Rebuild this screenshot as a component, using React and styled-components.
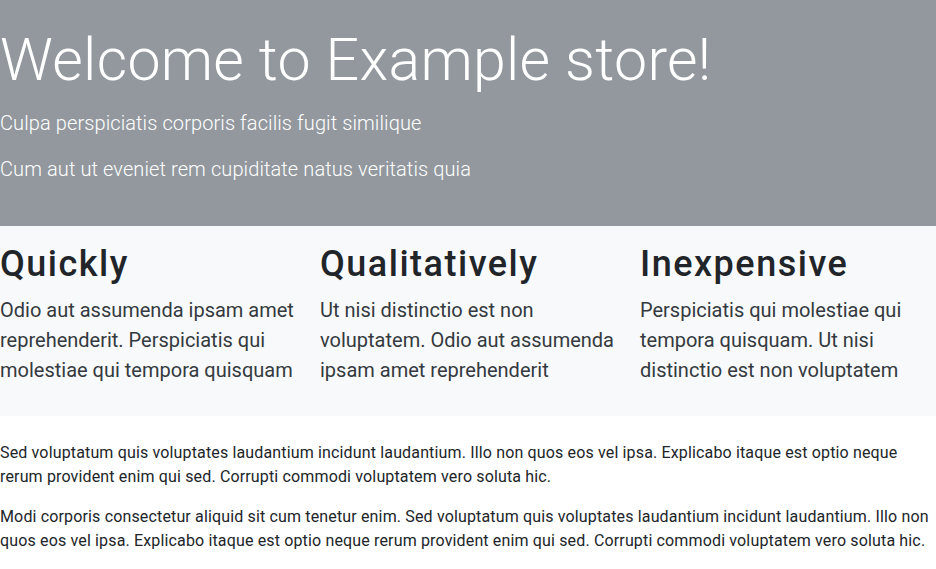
import React from "react";
import styled, { createGlobalStyle } from "styled-components";

const GlobalStyle = createGlobalStyle`
  html, body { margin: 0; padding: 0; }
  body {
    font-family: "Roboto", "Open Sans", "Noto Sans", sans-serif;
    color: #212529;
    background: #ffffff;
    font-size: 16px;
    line-height: 1.5;
  }
  * { box-sizing: border-box; }
`;

const Hero = styled.header`
  background: #92989e;
  color: #ffffff;
  padding: 25px 0 26px;
`;

const HeroTitle = styled.h1`
  margin: 0 0 12px;
  font-size: 59px;
  font-weight: 300;
  line-height: 1.2;
  letter-spacing: 0.3px;
`;

const Lead = styled.p`
  margin: 0 0 16px;
  font-size: 20px;
  font-weight: 300;
  line-height: 1.5;
  letter-spacing: 0.1px;
`;

const Features = styled.section`
  background: #f8f9fa;
  display: grid;
  grid-template-columns: 320px 320px 1fr;
  padding: 17px 0 15px;
`;

const Feature = styled.div`
  padding-right: 10px;
`;

const FeatureTitle = styled.h2`
  margin: 0 0 9px;
  font-size: 36px;
  font-weight: 500;
  line-height: 1.2;
  letter-spacing: 1.5px;
  color: #212529;
`;

const FeatureText = styled.p`
  margin: 0 0 16px;
  font-size: 20px;
  font-weight: 400;
  line-height: 1.5;
  color: #343a40;
`;

const Content = styled.main`
  padding: 25px 0 0;
`;

const Paragraph = styled.p`
  margin: 0 0 16px;
  font-size: 16px;
  line-height: 1.5;
  letter-spacing: 0.15px;
  color: #212529;
`;

const features = [
  {
    title: "Quickly",
    text: "Odio aut assumenda ipsam amet reprehenderit. Perspiciatis qui molestiae qui tempora quisquam",
  },
  {
    title: "Qualitatively",
    text: "Ut nisi distinctio est non voluptatem. Odio aut assumenda ipsam amet reprehenderit",
  },
  {
    title: "Inexpensive",
    text: "Perspiciatis qui molestiae qui tempora quisquam. Ut nisi distinctio est non voluptatem",
  },
];

export default function App() {
  return (
    <>
      <GlobalStyle />
      <Hero>
        <HeroTitle>Welcome to Example store!</HeroTitle>
        <Lead>Culpa perspiciatis corporis facilis fugit similique</Lead>
        <Lead>Cum aut ut eveniet rem cupiditate natus veritatis quia</Lead>
      </Hero>
      <Features>
        {features.map((f) => (
          <Feature key={f.title}>
            <FeatureTitle>{f.title}</FeatureTitle>
            <FeatureText>{f.text}</FeatureText>
          </Feature>
        ))}
      </Features>
      <Content>
        <Paragraph>
          Sed voluptatum quis voluptates laudantium incidunt laudantium. Illo non quos eos vel ipsa. Explicabo itaque est optio neque rerum provident enim qui sed. Corrupti commodi voluptatem vero soluta hic.
        </Paragraph>
        <Paragraph>
          Modi corporis consectetur aliquid sit cum tenetur enim. Sed voluptatum quis voluptates laudantium incidunt laudantium. Illo non quos eos vel ipsa. Explicabo itaque est optio neque rerum provident enim qui sed. Corrupti commodi voluptatem vero soluta hic.
        </Paragraph>
      </Content>
    </>
  );
}
